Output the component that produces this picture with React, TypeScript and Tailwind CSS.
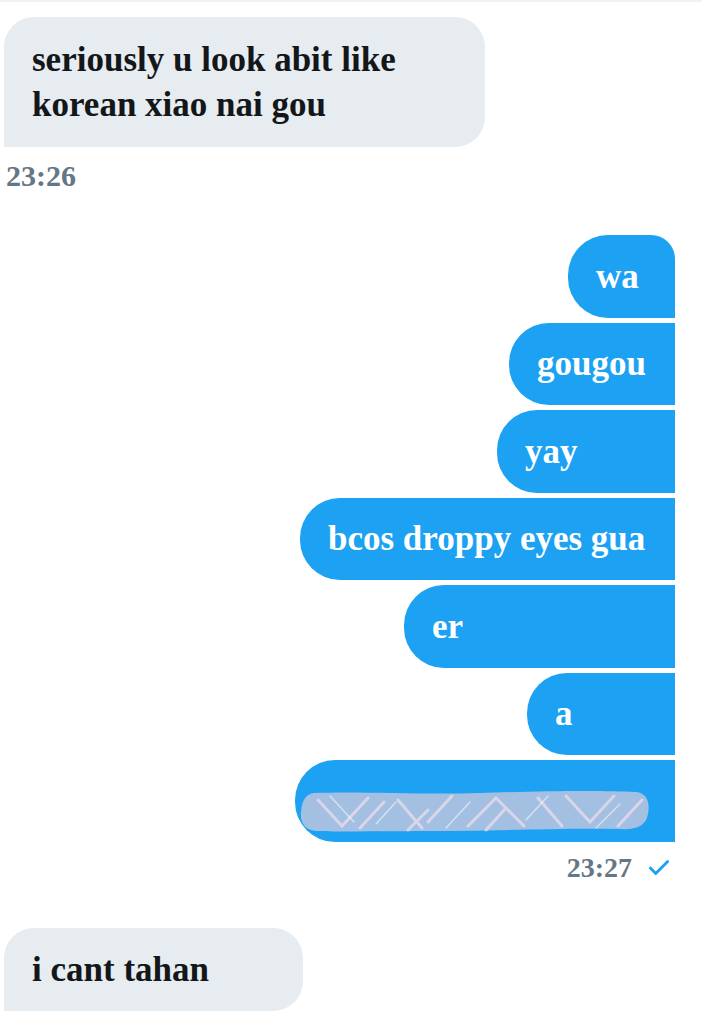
import { Check } from 'lucide-react'

const sent = [
  { id: 'wa', text: 'wa', w: 'w-[107px]', first: true },
  { id: 'gougou', text: 'gougou', w: 'w-[166px]' },
  { id: 'yay', text: 'yay', w: 'w-[178px]' },
  { id: 'bcos', text: 'bcos droppy eyes gua', w: 'w-[375px]' },
  { id: 'er', text: 'er', w: 'w-[271px]' },
  { id: 'a', text: 'a', w: 'w-[148px]' },
]

function Scribble() {
  return (
    <svg width="350" height="44" viewBox="0 0 350 44" className="block">
      <path
        d="M14 3 C60 1 120 5 180 3 C240 1 300 0 336 2 C348 3 350 14 348 24 C346 36 336 40 320 39 C260 38 200 41 140 41 C90 41 40 42 16 41 C4 40 0 32 1 22 C2 10 6 4 14 3 Z"
        fill="#a3c0e2"
      />
      <g stroke="#e8dbeb" strokeWidth="3" strokeLinecap="round" opacity="0.8" fill="none">
        <path d="M18 10 L42 36 L68 8" />
        <path d="M60 38 L84 12" />
        <path d="M98 10 L122 38" />
        <path d="M128 32 L152 6" />
        <path d="M168 36 L196 8 L224 36" />
        <path d="M186 40 L206 18" />
        <path d="M238 8 L262 36" />
        <path d="M266 6 L290 32 L314 6" />
        <path d="M318 36 L342 10" />
        <path d="M108 40 L128 20" />
      </g>
      <g stroke="#ffffff" strokeWidth="1.4" strokeLinecap="round" opacity="0.55" fill="none">
        <path d="M30 6 L54 32" />
        <path d="M146 38 L170 12" />
        <path d="M226 30 L248 6" />
        <path d="M296 38 L320 14" />
        <path d="M76 34 L96 12" />
      </g>
    </svg>
  )
}

export default function App() {
  return (
    <div className="w-[702px] h-[1024px] overflow-hidden bg-white border-t-2 border-[#f1f1f1] font-['Liberation_Serif',serif] font-bold">
      {/* received */}
      <div className="ml-[4px] mt-[15px] w-[481px] rounded-tl-[30px] rounded-r-[30px] bg-[#e6ecf0] px-7 py-5 text-[35px] leading-[45px] text-[#14171a]">
        seriously u look abit like korean xiao nai gou
      </div>
      <div className="mt-[11px] pl-[6px] text-[30px] leading-[36px] text-[#657786]">23:26</div>

      {/* sent */}
      <div className="mt-[41px] flex flex-col items-end gap-[5px] pr-[27px]">
        {sent.map((m) => (
          <div
            key={m.id}
            className={`${m.w} rounded-l-[40px] ${m.first ? 'rounded-tr-[24px]' : ''} bg-[#1da1f2] pl-7 py-[18.75px] text-[35px] leading-[45px] text-white`}
          >
            {m.text}
          </div>
        ))}
        <div className="w-[380px] rounded-l-[40px] bg-[#1da1f2] pl-[5px] pt-[30px] pb-[8px]">
          <Scribble />
        </div>
      </div>
      <div className="mt-[9px] flex items-center justify-end gap-[14px] pr-[30px] text-[28px] leading-[34px] text-[#657786]">
        <span>23:27</span>
        <Check className="w-[26px] h-[26px] text-[#1da1f2]" strokeWidth={2.6} />
      </div>

      {/* received */}
      <div className="ml-[4px] mt-[43px] w-[299px] rounded-tl-[30px] rounded-r-[30px] bg-[#e6ecf0] px-7 py-[19px] text-[35px] leading-[45px] text-[#14171a]">
        i cant tahan
      </div>
    </div>
  )
}
